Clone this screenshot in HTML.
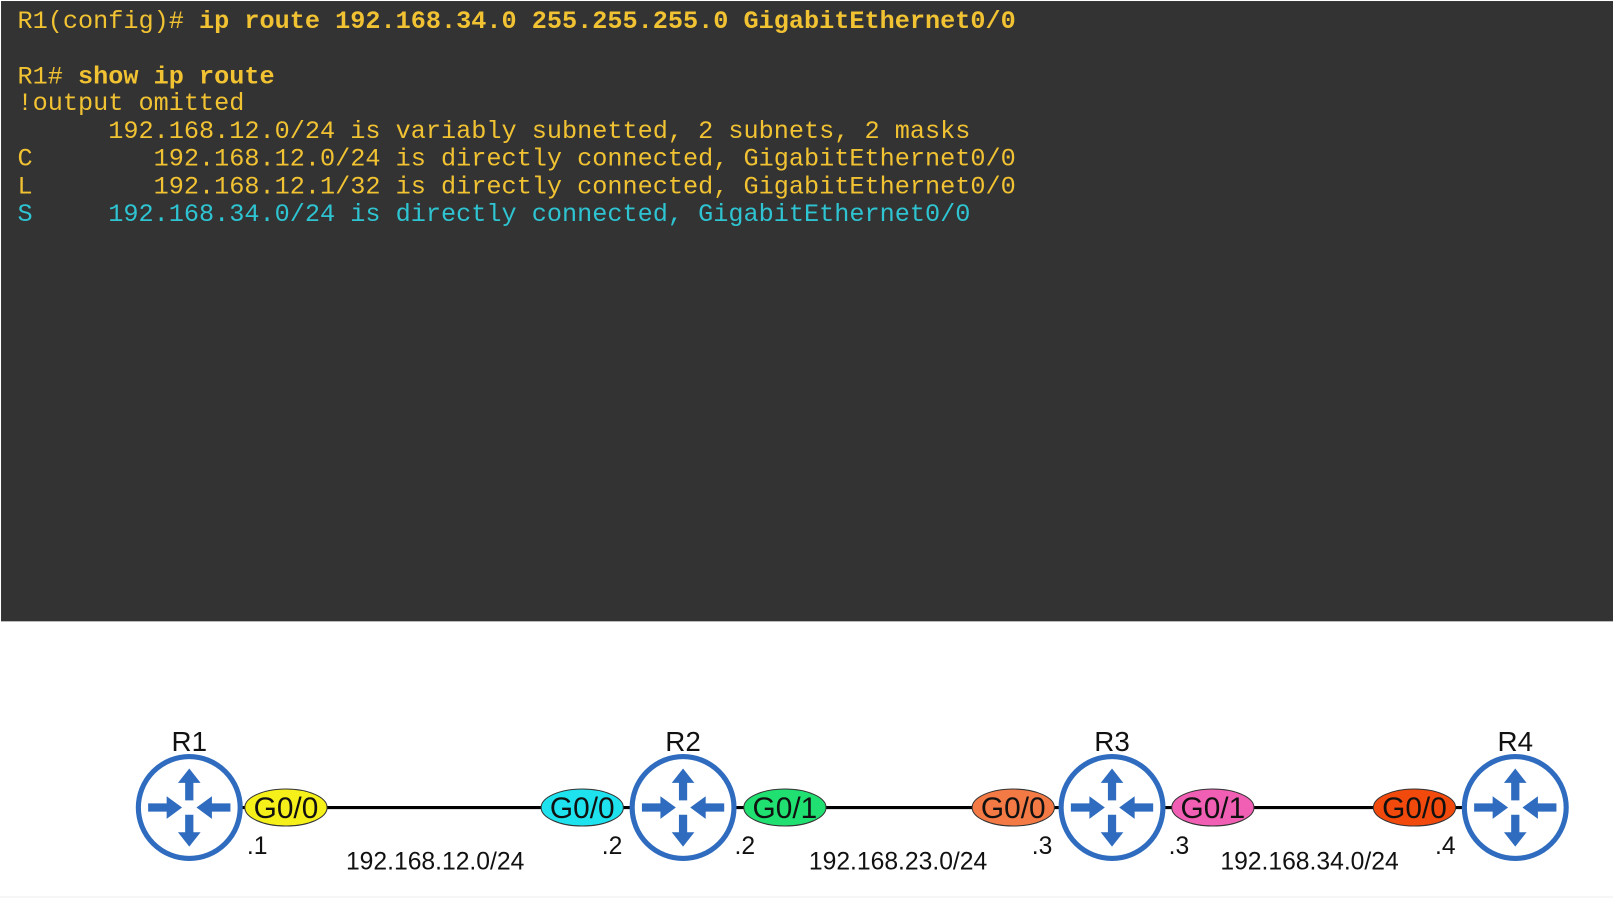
<!DOCTYPE html>
<html><head><meta charset="utf-8"><style>
html,body{margin:0;padding:0;width:1613px;height:904px;overflow:hidden;background:#fff}
#w{position:absolute;left:0;top:0;width:1568px;height:879px;transform:scale(1.02870);transform-origin:0 0}
#term{position:absolute;left:1px;top:1px;width:1567px;height:603px;background:#333333}
pre{position:absolute;left:17px;top:9px;margin:0;font-family:"Liberation Mono",monospace;font-size:24.5px;line-height:26.8px;color:#f1c232}
b{font-weight:bold}
.c{color:#2ec4d2}
svg{position:absolute;left:0;top:0}
</style></head><body><div id="w">
<div id="term"></div>
<pre>R1(config)# <b>ip route 192.168.34.0 255.255.255.0 GigabitEthernet0/0</b>

R1# <b>show ip route</b>
!output omitted
      192.168.12.0/24 is variably subnetted, 2 subnets, 2 masks
C        192.168.12.0/24 is directly connected, GigabitEthernet0/0
L        192.168.12.1/32 is directly connected, GigabitEthernet0/0
<span class="c">S     192.168.34.0/24 is directly connected, GigabitEthernet0/0</span></pre>
<svg width="1568" height="879" viewBox="0 0 1568 879">
<defs>
<g id="r">
<circle cx="0" cy="0" r="49.5" fill="#fff" stroke="#2f6cbf" stroke-width="5"/>
<g fill="#2f6cbf">
<path d="M-4,-7 L-4,-24 L-11,-24 L0,-38 L11,-24 L4,-24 L4,-7 Z"/>
<path d="M-4,7 L-4,24 L-11,24 L0,38 L11,24 L4,24 L4,7 Z"/>
<path d="M-40,-4 L-22,-4 L-22,-11 L-7,0 L-22,11 L-22,4 L-40,4 Z"/>
<path d="M40,-4 L22,-4 L22,-11 L7,0 L22,11 L22,4 L40,4 Z"/>
</g>
</g>
</defs>
<line x1="230" y1="785" x2="1425" y2="785" stroke="#000" stroke-width="3"/>
<g font-family="Liberation Sans, sans-serif" font-size="27" text-anchor="middle" fill="#111">
<use href="#r" x="184" y="785"/><use href="#r" x="664" y="785"/><use href="#r" x="1081" y="785"/><use href="#r" x="1473" y="785"/>
<text x="184" y="730">R1</text><text x="664" y="730">R2</text><text x="1081" y="730">R3</text><text x="1473" y="730">R4</text>
<g stroke="#333" stroke-width="1">
<ellipse cx="278" cy="785" rx="40" ry="18" fill="#f5ef1a"/>
<ellipse cx="566" cy="785" rx="40" ry="18" fill="#1ee3ee"/>
<ellipse cx="763" cy="785" rx="40" ry="18" fill="#1fe070"/>
<ellipse cx="985" cy="785" rx="40" ry="18" fill="#f47a45"/>
<ellipse cx="1179" cy="785" rx="40" ry="18" fill="#f05fb4"/>
<ellipse cx="1375" cy="785" rx="40" ry="18" fill="#f24a0c"/>
</g>
<g font-size="29">
<text x="278" y="795">G0/0</text><text x="566" y="795">G0/0</text><text x="763" y="795">G0/1</text>
<text x="985" y="795">G0/0</text><text x="1179" y="795">G0/1</text><text x="1375" y="795">G0/0</text>
</g>
<g font-size="24">
<text x="250" y="830">.1</text><text x="595" y="830">.2</text><text x="724" y="830">.2</text>
<text x="1013" y="830">.3</text><text x="1146" y="830">.3</text><text x="1405" y="830">.4</text>
<text x="423" y="845">192.168.12.0/24</text><text x="873" y="845">192.168.23.0/24</text><text x="1273" y="845">192.168.34.0/24</text>
</g>
</g>
<line x1="0" y1="872" x2="1568" y2="872" stroke="#eee" stroke-width="1"/>
</svg>
</div></body></html>
